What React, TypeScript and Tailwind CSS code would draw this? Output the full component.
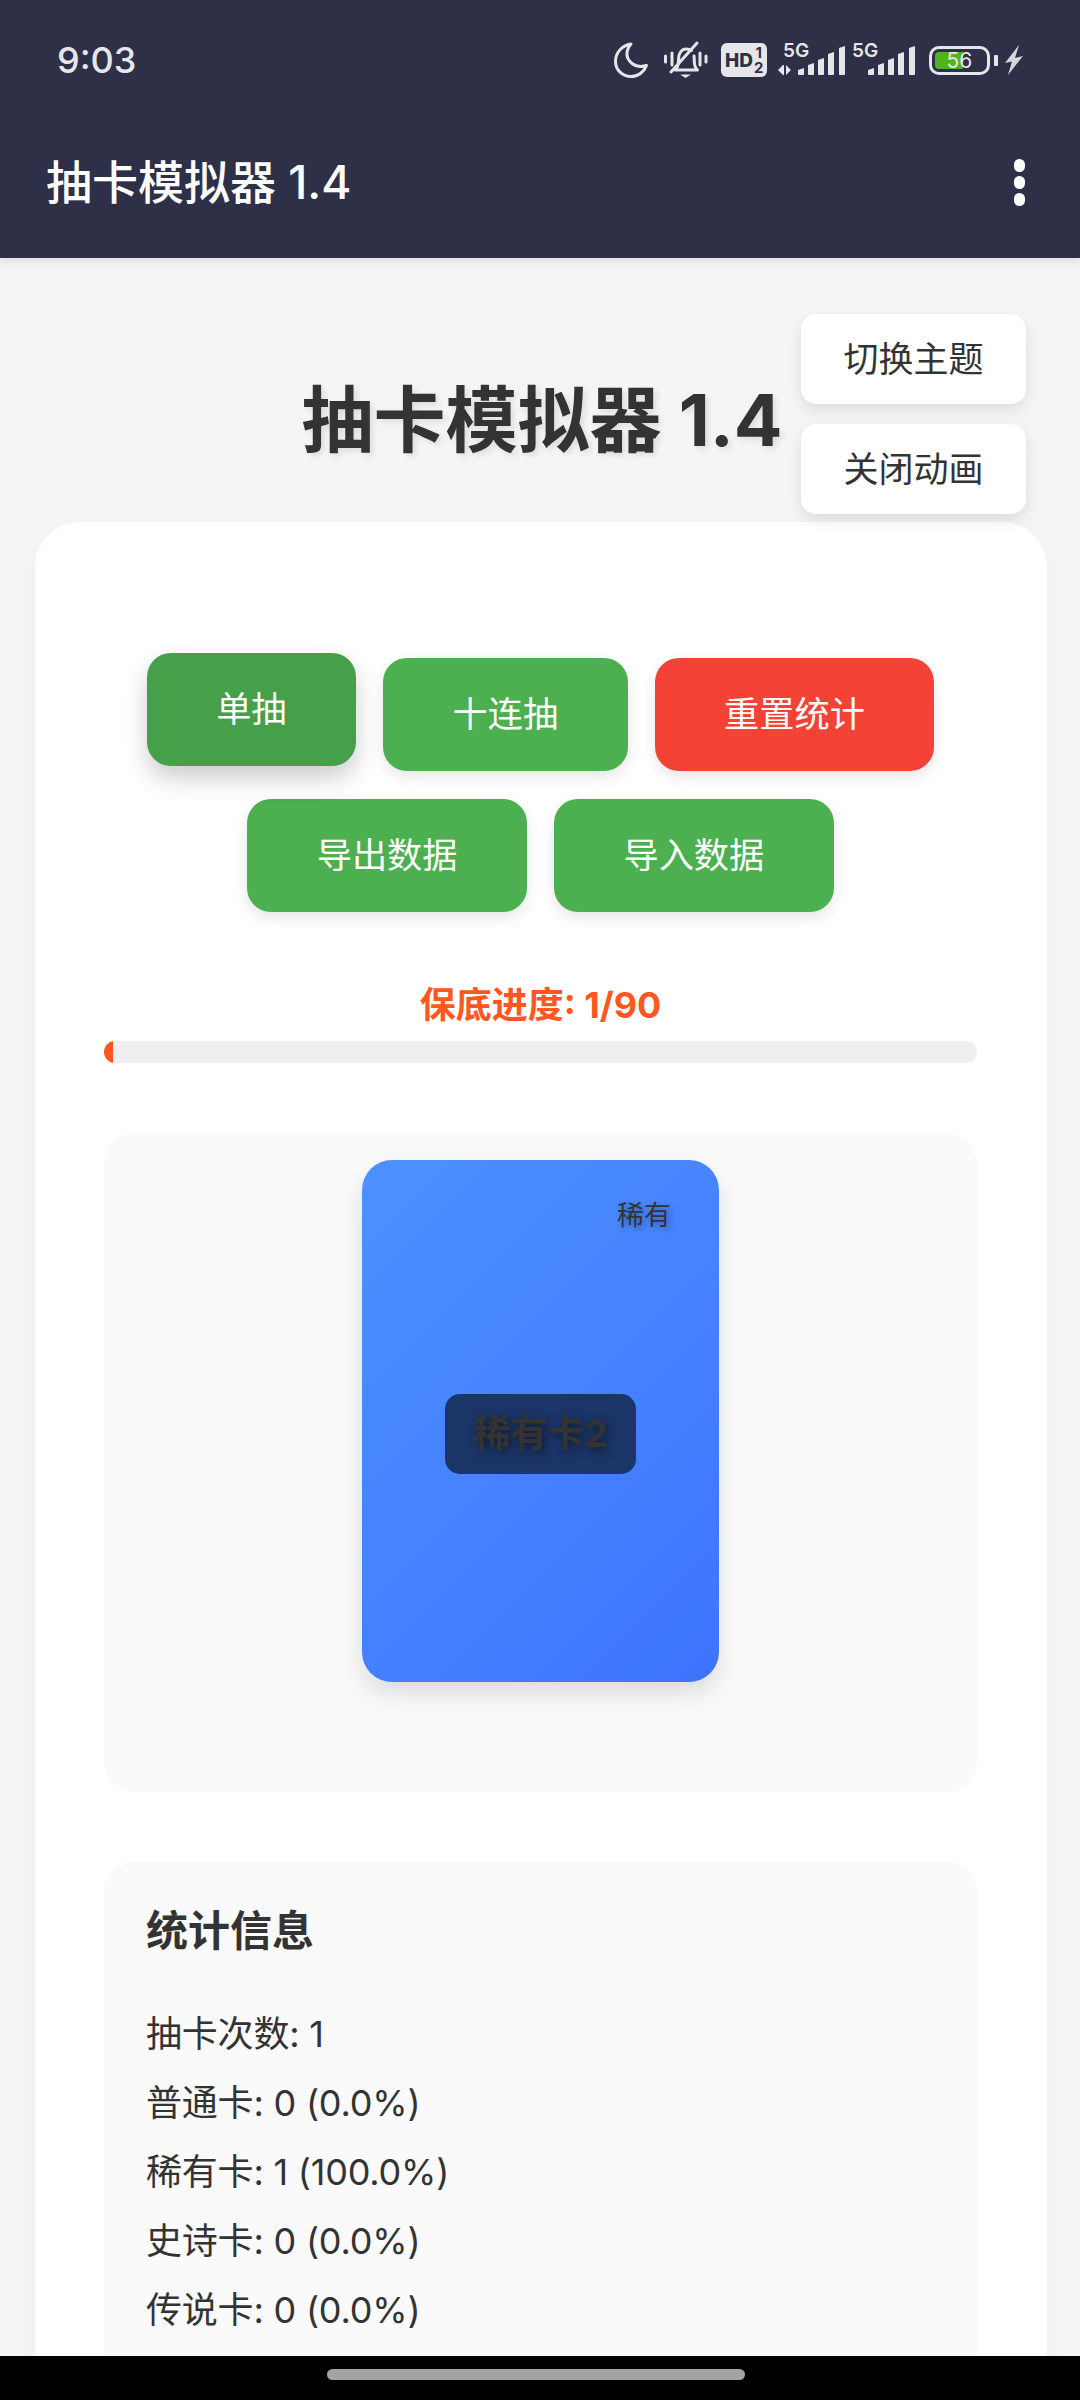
import React from 'react';

const MoonIcon = () => (
  <svg width="36" height="36" viewBox="0 0 36 36" fill="none" className="text-[#e6e6ea]">
    <path d="M17 2C7.500 3.500 1.500 11 1.500 19.500 1.500 28 8.500 34.500 17 34.500c7 0 13-4.500 15.500-11C21 27 12 19 13 10c.5-3 2-6 4-8Z" stroke="currentColor" strokeWidth="3" strokeLinejoin="round" />
  </svg>
);

const MutedBellIcon = () => (
  <svg width="44" height="38" viewBox="0 0 44 38" fill="none" className="text-[#e6e6ea]">
    <path d="M1.500 15v6M8 12v12M36 12v12M42 15v6" stroke="currentColor" strokeWidth="3" strokeLinecap="round" />
    <path d="M11 29c2.500-2 3.500-5 3.500-10 0-7 3-11 8-11 2 0 3.500.5 5 1.500M30 15c.3 2 .3 3 .3 5 0 4 1 7 3.200 9H11" stroke="currentColor" strokeWidth="3" strokeLinejoin="round" strokeLinecap="round" />
    <path d="M7 31 33 2" stroke="currentColor" strokeWidth="3" strokeLinecap="round" />
    <path d="M16 33.500h11l-5.500 3.500Z" fill="currentColor" />
  </svg>
);

const HdBadge = () => (
  <div className="flex h-[34px] w-[46px] items-center rounded-[6px] bg-[#e6e6ea] pl-[4px] text-[#2d3047]">
    <span className="text-[19px] font-extrabold leading-none">HD</span>
    <span className="ml-[1px] flex flex-col items-center text-[15px] font-bold leading-[15px]">
      <span>1</span>
      <span>2</span>
    </span>
  </div>
);

// one bar with the slanted top the status bar uses
const Bar = ({ x, top }: { x: number; top: number }) => (
  <path d={`M${x} ${top + 2}L${x + 6} ${top}V30q0 1-1 1H${x + 1}q-1 0-1-1Z`} />
);

// arrows variant is the data sim, it is a bit wider
const SignalBars = ({ arrows }: { arrows?: boolean }) => (
  <div className={`relative h-[32px] text-[#e6e6ea] ${arrows ? 'w-[67px]' : 'w-[63px]'}`}>
    <span className={`absolute top-[-4px] text-[19px] font-semibold leading-[22px] ${arrows ? 'left-[5px]' : 'left-0'}`}>5G</span>
    {arrows ? (
      <svg width="67" height="32" viewBox="0 0 67 32" fill="currentColor" className="block">
        <path d="M0 26l5-5v10ZM8 21v10l5-5ZM5 21h1v10H5Z" />
        <Bar x={20} top={24} />
        <Bar x={30} top={19} />
        <Bar x={40} top={14} />
        <Bar x={50} top={8} />
        <Bar x={61} top={2} />
      </svg>
    ) : (
      <svg width="63" height="32" viewBox="0 0 63 32" fill="currentColor" className="block">
        <Bar x={16} top={24} />
        <Bar x={26} top={19} />
        <Bar x={36} top={14} />
        <Bar x={46} top={8} />
        <Bar x={57} top={2} />
      </svg>
    )}
  </div>
);

const Battery = () => (
  <div className="flex items-center">
    <div className="relative h-[29px] w-[61px] rounded-[10px] border-[3px] border-[#e6e6ea] p-[3px]">
      <div className="h-full w-[57%] rounded-l-[4px] bg-[#52b31f]" />
      <span className="absolute inset-0 flex items-center justify-center text-[21px] leading-none text-[#e6e6ea]">56</span>
    </div>
    <div className="ml-[4px] h-[11px] w-[4px] rounded-[1px] bg-[#e6e6ea]" />
  </div>
);

const BoltIcon = () => (
  <svg width="18" height="30" viewBox="0 0 18 30">
    <path d="M14 0 0 18l7-1.500L3 30l15-19-8 2Z" fill="#d8d8dc" />
  </svg>
);

const StatusBar = () => (
  <div className="flex h-[120px] items-center justify-between px-[57px]">
    <span className="text-[36px] font-medium leading-none text-[#e6e6ea]">9:03</span>
    <div className="flex items-center">
      <MoonIcon />
      <div className="ml-[14px]"><MutedBellIcon /></div>
      <div className="ml-[13px]"><HdBadge /></div>
      <div className="ml-[11px]"><SignalBars arrows /></div>
      <div className="ml-[7px]"><SignalBars /></div>
      <div className="ml-[14px]"><Battery /></div>
      <div className="ml-[7px]"><BoltIcon /></div>
    </div>
  </div>
);

const ActionButton = ({ label, className }: { label: string; className: string }) => (
  <button className={`h-[113px] rounded-[24px] px-[69.5px] text-[35.2px] text-white ${className}`}>{label}</button>
);

const StatRow = ({ text }: { text: string }) => (
  <p className="text-[36px] leading-[69px] tracking-[-0.2px] text-[#333333]">{text}</p>
);

const stats = ['抽卡次数: 1', '普通卡: 0 (0.0%)', '稀有卡: 1 (100.0%)', '史诗卡: 0 (0.0%)', '传说卡: 0 (0.0%)'];

export default function App() {
  return (
    <div className="flex h-[2400px] w-[1080px] flex-col overflow-hidden bg-[#f5f5f5] font-['Inter','Noto_Sans_CJK_SC',sans-serif]">
      <header className="z-10 h-[258px] shrink-0 bg-[#2d3047] shadow-[0_3px_9px_rgba(0,0,0,0.1)]">
        <StatusBar />
        <div className="flex h-[124px] items-center justify-between pl-[46px] pr-[55px]">
          <h1 className="text-[46px] font-medium leading-none text-white">抽卡模拟器 1.4</h1>
          <div className="flex flex-col gap-[4px]">
            <span className="h-[13px] w-[11px] rounded-full bg-white" />
            <span className="h-[13px] w-[11px] rounded-full bg-white" />
            <span className="h-[13px] w-[11px] rounded-full bg-white" />
          </div>
        </div>
      </header>

      <main className="relative min-h-0 flex-1 overflow-hidden pl-[35px] pr-[33px]">
        <div className="absolute right-[54px] top-[56px] z-10 flex flex-col gap-[20px]">
          <button className="h-[90px] w-[225px] rounded-[15px] bg-white text-[35px] text-[#333333] shadow-[0_6px_15px_rgba(0,0,0,0.1)]">切换主题</button>
          <button className="h-[90px] w-[225px] rounded-[15px] bg-white text-[35px] text-[#333333] shadow-[0_6px_15px_rgba(0,0,0,0.1)]">关闭动画</button>
        </div>

        <h2 className="flex h-[264px] items-center justify-center pl-[2px] pt-[60px] text-[72px] font-bold leading-none text-[#333333] [text-shadow:3px_3px_6px_rgba(0,0,0,0.1)]">
          抽卡模拟器 1.4
        </h2>

        <section className="rounded-[45px] bg-white pl-[69px] pr-[70px] pt-[136px] shadow-[0_6px_20px_rgba(0,0,0,0.03)]">
          <div className="flex flex-wrap justify-center gap-x-[27px] gap-y-[28px]">
            <ActionButton label="单抽" className="-translate-y-[5px] bg-[#45a049] shadow-[0_12px_24px_rgba(0,0,0,0.2)]" />
            <ActionButton label="十连抽" className="bg-[#4caf50] shadow-[0_6px_15px_rgba(0,0,0,0.1)]" />
            <ActionButton label="重置统计" className="bg-[#f44336] shadow-[0_6px_15px_rgba(0,0,0,0.1)]" />
            <ActionButton label="导出数据" className="bg-[#4caf50] shadow-[0_6px_15px_rgba(0,0,0,0.1)]" />
            <ActionButton label="导入数据" className="bg-[#4caf50] shadow-[0_6px_15px_rgba(0,0,0,0.1)]" />
          </div>

          <div className="mt-[66px]">
            <p className="text-center text-[36px] font-bold leading-[54px] text-[#ff5722]">保底进度: 1/90</p>
            <div className="mt-[9px] h-[22px] overflow-hidden rounded-[11px] bg-[#eeeeee]">
              <div className="h-full w-[9px] bg-[#ff5722]" />
            </div>
          </div>

          <div className="mt-[70px] flex h-[659px] justify-center rounded-[30px] bg-[#fafafa] pt-[27px]">
            <div className="relative h-[522px] w-[357px] rounded-[30px] bg-[linear-gradient(135deg,#4d91ff,#3d74ff)] shadow-[0_12px_24px_rgba(0,0,0,0.12)]">
              <span className="absolute right-[48px] top-[36px] text-[27px] leading-[40px] text-[#333333] [text-shadow:3px_3px_6px_rgba(0,0,0,0.3)]">稀有</span>
              <div className="absolute left-[83px] top-[234px] flex h-[80px] w-[191px] items-center justify-center rounded-[15px] bg-[#1b3568] text-[37px] font-bold text-[#333333] [text-shadow:3px_3px_9px_rgba(0,0,0,0.5)]">
                稀有卡2
              </div>
            </div>
          </div>

          <div className="mt-[70px] rounded-[30px] bg-[#fafafa] px-[42px] pb-[60px] pt-[42px]">
            <h3 className="mb-[42px] text-[42px] font-bold leading-[54px] text-[#333333]">统计信息</h3>
            {stats.map((s) => (
              <StatRow key={s} text={s} />
            ))}
          </div>
        </section>
      </main>

      <div className="z-10 flex h-[44px] shrink-0 justify-center bg-black pr-[8px] pt-[13px]">
        <div className="h-[11px] w-[418px] rounded-full bg-[#a3a3a3]" />
      </div>
    </div>
  );
}
